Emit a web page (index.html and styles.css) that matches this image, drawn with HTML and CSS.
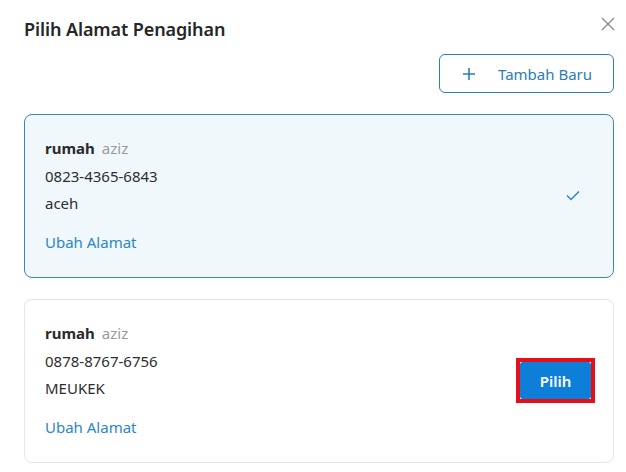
FILE: index.html
```html
<!DOCTYPE html>
<html lang="id">
<head>
<meta charset="utf-8">
<title>Pilih Alamat Penagihan</title>
<link rel="stylesheet" href="styles.css">
</head>
<body>
<div class="dialog">
  <header class="head">
    <h1 class="title">Pilih Alamat Penagihan</h1>
    <button class="close" aria-label="Tutup">
      <svg width="14" height="14" viewBox="0 0 14 14"><path d="M1 1L13 13M13 1L1 13" stroke="#8a8a8a" stroke-width="1.4" fill="none"/></svg>
    </button>
  </header>
  <div class="actions">
    <button class="add-btn">
      <svg width="14" height="14" viewBox="0 0 14 14"><path d="M7 1V13M1 7H13" stroke="#2b7db6" stroke-width="1.6" fill="none"/></svg>
      <span>Tambah Baru</span>
    </button>
  </div>
  <div class="list">
    <div class="card selected">
      <div class="info">
        <div class="name"><b>rumah</b><span class="recv">aziz</span></div>
        <div class="line">0823-4365-6843</div>
        <div class="line">aceh</div>
        <a class="edit">Ubah Alamat</a>
      </div>
      <div class="side">
        <svg class="check" width="14" height="11" viewBox="0 0 14 11"><path d="M1 5.5L5 9.5L13 1.5" stroke="#3a80b8" stroke-width="1.5" fill="none"/></svg>
      </div>
    </div>
    <div class="card">
      <div class="info">
        <div class="name"><b>rumah</b><span class="recv">aziz</span></div>
        <div class="line">0878-8767-6756</div>
        <div class="line">MEUKEK</div>
        <a class="edit">Ubah Alamat</a>
      </div>
      <div class="side side-btn">
        <span class="hl"><button class="pick">Pilih</button></span>
      </div>
    </div>
  </div>
</div>
</body>
</html>
```
FILE: styles.css
```css
* { box-sizing: border-box; }
html, body { margin: 0; padding: 0; background: #fff; }
body { font-family: "Noto Sans", "Open Sans", sans-serif; color: #2e2e2e; }
.dialog { width: 626px; padding: 0 12px 0 24px; }
.head { display: flex; justify-content: space-between; align-items: flex-start; height: 54px; }
.title { margin: 17px 0 0 0; font-size: 18px; font-weight: 600; color: #262626; line-height: 24px; letter-spacing: -0.1px; }
.close { border: 0; background: none; padding: 0; margin: 16px -2px 0 0; width: 16px; height: 16px; display: flex; align-items: center; justify-content: center; }
.actions { display: flex; justify-content: flex-end; }
.add-btn { display: flex; align-items: center; gap: 22px; height: 39px; width: 175px; padding: 0 0 0 22px; border: 1px solid #2f7fb4; border-radius: 6px; background: #fff; font-family: inherit; font-size: 15px; color: #2b7db6; }
.list { display: flex; flex-direction: column; gap: 21px; margin-top: 21px; }
.card { display: flex; align-items: center; justify-content: space-between; border: 1px solid #e3e5e8; border-radius: 8px; padding: 20px 18px 21px 20px; min-height: 164px; }
.card.selected { background: #f0f8fc; border-color: #3d85b9; }
.info { display: flex; flex-direction: column; }
.name, .line { font-size: 15px; line-height: 27.5px; }
.name b { font-weight: 700; color: #2a2a2a; }
.recv { color: #9a9a9a; margin-left: 7px; }
.edit { margin-top: 11px; font-size: 15px; line-height: 27px; color: #2d86c4; }
.side { display: flex; align-items: center; }
.check { margin-right: 15px; }
.hl { display: flex; border: 4px solid #e3101c; margin-right: 0; }
.pick { border: 0; background: #0d7fd8; color: #fff; width: 71px; height: 37px; border-radius: 3px; font-family: inherit; font-size: 15px; font-weight: 600; padding: 0; }
```
